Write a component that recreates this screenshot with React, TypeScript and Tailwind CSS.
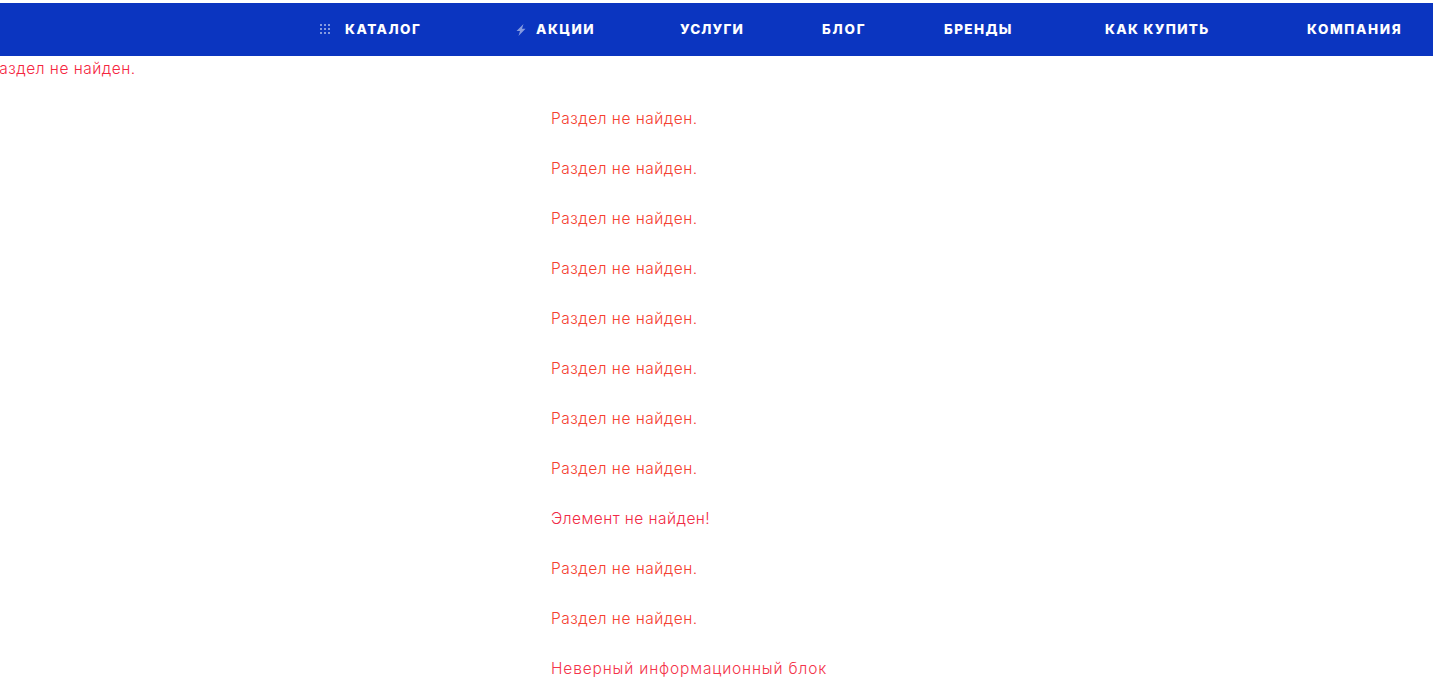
const items = ["Раздел не найден.","Раздел не найден.","Раздел не найден.","Раздел не найден.","Раздел не найден.","Раздел не найден.","Раздел не найден.","Раздел не найден.","Элемент не найден!","Раздел не найден.","Раздел не найден.","Неверный информационный блок"];

function Grid() {
  const dots = Array.from({ length: 9 });
  return (
    <span className="grid grid-cols-3 gap-[2px] w-[10px] h-[10px] opacity-50">
      {dots.map((_, i) => <span key={i} className="w-[2px] h-[2px] bg-white" />)}
    </span>
  );
}

function Bolt() {
  return (
    <svg width="10" height="12" viewBox="0 0 10 12" className="block opacity-50">
      <path d="M7.5 0 L0.5 7 H4 L2.5 12 L9.5 4.8 H6 Z" fill="#fff" />
    </svg>
  );
}

function Link({ w, ml, track, children }: { w: number; ml: string; track: string; children: string }) {
  return (
    <a className={`flex items-center text-white font-extrabold text-[13.5px] whitespace-nowrap ${track} ${ml}`} style={{ width: w }}>
      {children}
    </a>
  );
}

function lineStyle(i: number) {
  if (i === 8) return "tracking-[0.45px] text-[#f12a45]";
  if (i === 11) return "tracking-[0.84px] text-[#f4344a]";
  return "tracking-[0.5px] text-[#f5402f]";
}

export default function App() {
  return (
    <div className="h-[688px] overflow-hidden bg-white [font-family:Inter,'Open_Sans',sans-serif]">
      <div className="h-[3px]" />
      <nav className="h-[53px] bg-[#0b35c0] flex items-start pt-[16px] leading-[20px]">
        <span className="ml-[320px] mt-[5px] flex"><Grid /></span>
        <Link w={76} ml="ml-[15px]" track="tracking-[1.5px]">КАТАЛОГ</Link>
        <span className="ml-[95px] mt-[5px] flex"><Bolt /></span>
        <Link w={59} ml="ml-[10px]" track="tracking-[1.5px]">АКЦИИ</Link>
        <Link w={64} ml="ml-[85px]" track="tracking-[1.1px]">УСЛУГИ</Link>
        <Link w={44} ml="ml-[78px]" track="tracking-[1.8px]">БЛОГ</Link>
        <Link w={69} ml="ml-[78px]" track="tracking-[1.4px]">БРЕНДЫ</Link>
        <Link w={104} ml="ml-[92px]" track="tracking-[1.3px]">КАК КУПИТЬ</Link>
        <Link w={95} ml="ml-[98px]" track="tracking-[1.6px]">КОМПАНИЯ</Link>
      </nav>
      <div className="h-[26px] overflow-hidden text-[15.5px] font-light leading-[25px] tracking-[0.5px] text-[#f5263f]">
        <div className="-ml-[11px]">Раздел не найден.</div>
      </div>
      <div className="pl-[551px] pt-[24px] flex flex-col">
        {items.map((t, i) => (
          <div key={i} className={`h-[50px] font-light leading-[25px] text-[15.5px] ${lineStyle(i)}`}>{t}</div>
        ))}
      </div>
    </div>
  );
}
